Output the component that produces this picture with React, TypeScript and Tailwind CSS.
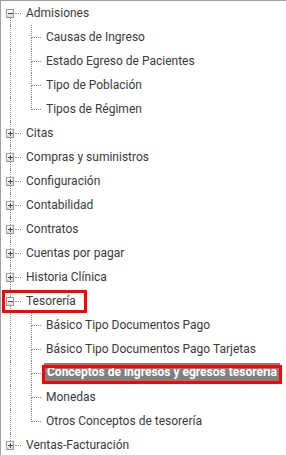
import React from "react";

type Node = { label: string; children?: string[]; selected?: string; framed?: boolean };

const tree: Node[] = [
  { label: "Admisiones", children: ["Causas de Ingreso", "Estado Egreso de Pacientes", "Tipo de Población", "Tipos de Régimen"] },
  { label: "Citas" },
  { label: "Compras y suministros" },
  { label: "Configuración" },
  { label: "Contabilidad" },
  { label: "Contratos" },
  { label: "Cuentas por pagar" },
  { label: "Historia Clínica" },
  {
    label: "Tesorería",
    framed: true,
    selected: "Conceptos de ingresos y egresos tesorería",
    children: [
      "Básico Tipo Documentos Pago",
      "Básico Tipo Documentos Pago Tarjetas",
      "Conceptos de ingresos y egresos tesorería",
      "Monedas",
      "Otros Conceptos de tesorería",
    ],
  },
  { label: "Ventas-Facturación" },
];

const dot = "border-dotted border-[#8c8c8c]";

function Toggle({ open }: { open: boolean }) {
  return (
    <div className="w-[9px] h-[9px] ml-[5px] border border-[#9a9a9a] bg-gradient-to-b from-white to-[#dcdcdc] flex items-center justify-center relative">
      <div className="w-[5px] h-px bg-[#4a4a4a]" />
      {!open && <div className="absolute w-px h-[5px] bg-[#4a4a4a]" />}
    </div>
  );
}

function RootRow({ node, first, last }: { node: Node; first: boolean; last: boolean }) {
  const open = !!node.children;
  return (
    <div className="relative flex h-6 items-center">
      <div className="flex flex-col w-[20px] h-6">
        <div className={`h-[8px] ml-[9px] ${first ? "" : `border-l ${dot}`}`} />
        <div className="flex items-center h-[9px]">
          <Toggle open={open} />
          <div className={`w-[6px] ml-[1px] border-t ${dot}`} />
        </div>
        <div className={`h-[7px] ml-[9px] ${last ? "" : `border-l ${dot}`}`} />
      </div>
      <span className="ml-[5px] text-[12px] text-[#3a3a3a] whitespace-nowrap">{node.label}</span>
      {node.framed && (
        <div className="absolute left-[1px] top-[1px] w-[85px] h-[23px] border-[3px] border-[#ff0000]" />
      )}
    </div>
  );
}

function ChildRow({ label, last, selected }: { label: string; last: boolean; selected: boolean }) {
  return (
    <div className="flex h-6 items-center">
      <div className={`w-[20px] h-6`}>
        <div className={`h-6 ml-[9px] border-l ${dot}`} />
      </div>
      <div className="flex flex-col w-[20px] h-6">
        <div className={`h-[13px] ml-[10px] border-l border-b ${dot}`} />
        <div className={`h-[11px] ml-[10px] ${last ? "" : `border-l ${dot}`}`} />
      </div>
      {selected ? (
        <div className="relative ml-[3px] mt-[-1px]">
          <span className="block bg-[#808080] text-white font-bold text-[12px] leading-[19px] pl-[3px] pr-[3px] whitespace-nowrap">
            {label}
          </span>
          <div className="absolute left-[-2px] right-[-2px] top-[2px] bottom-[-2px] border-[3px] border-[#ff0000]" />
        </div>
      ) : (
        <span className="ml-[5px] text-[12px] text-[#3a3a3a] whitespace-nowrap">{label}</span>
      )}
    </div>
  );
}

export default function App() {
  return (
    <div
      className="w-[286px] h-[455px] bg-white border-t border-l border-[#a0a0a0] overflow-hidden"
      style={{ fontFamily: "Roboto, 'Liberation Sans', sans-serif" }}
    >
      {tree.map((node, i) => (
        <div key={node.label}>
          <RootRow node={node} first={i === 0} last={i === tree.length - 1} />
          {node.children?.map((c, j) => (
            <ChildRow
              key={c}
              label={c}
              last={j === node.children!.length - 1}
              selected={c === node.selected}
            />
          ))}
        </div>
      ))}
    </div>
  );
}
